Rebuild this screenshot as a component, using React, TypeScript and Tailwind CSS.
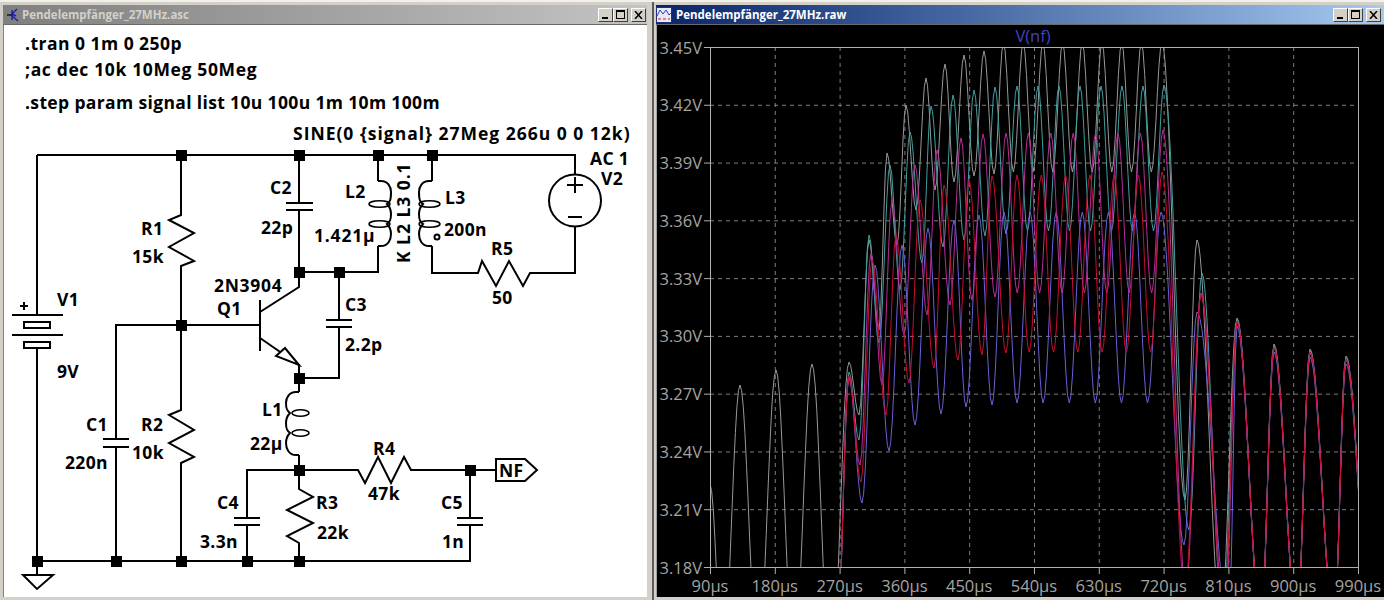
import React from "react";

type Pt = [number, number];

const FONT = "'Open Sans', 'DejaVu Sans', sans-serif";

// alternating extrema of each trace, page coordinates
const repeat = (x0: number, dx: number, n: number, hi: number, lo: number): Pt[] => {
  const out: Pt[] = [];
  for (let i = 0; i < n; i++) {
    out.push([x0 + i * dx, hi]);
    out.push([x0 + i * dx + dx / 2, lo]);
  }
  return out;
};

const tail = (off: number): Pt[] => [
  [1224 + off, 620],
  [1238, 320 + off],
  [1262, 620],
  [1275, 346 + off],
  [1298, 620],
  [1311, 351 + off],
  [1335, 620],
  [1347, 358 + off],
  [1372, 620],
];

const GRAY: Pt[] = [
  [711, 484], [724, 660], [741, 385], [759, 660], [777, 370], [795, 660], [813, 364], [832, 680],
  [850, 362], [860, 415], [870, 240], [880, 330], [888, 153], [898, 245], [907, 105], [917, 210],
  [927, 78], [936, 190], [946, 64], [955, 182], [965, 55], [975, 176], [985, 51], [995, 174],
  ...repeat(1004.5, 19.7, 8, 42, 172),
  [1163, 42], [1186, 500], [1198, 240], ...tail(-2),
];

const TEAL: Pt[] = [
  [838, 640], [850, 372], [860, 440], [870, 235], [880, 343], [891, 165], [901, 290], [911, 132],
  [923, 263], [932, 106], [944, 247], [954, 95], [965, 240], [975, 90], [986, 236], [996, 87],
  [1007, 234], ...repeat(1018, 21, 7, 86, 231),
  [1165, 85], [1190, 530], [1203, 273], ...tail(0),
];

const BLUE: Pt[] = [
  [838, 640], [850, 378], [863, 503], [876, 265], [890, 451], [903, 245], [916, 425], [929, 228],
  [942, 414], [955, 220], [967, 407], [980, 215], [993, 405], ...repeat(1005, 26.1, 6, 212, 403),
  [1162, 212], [1185, 545], [1198, 312], ...tail(6),
];

const MAGENTA: Pt[] = [
  [838, 640], [850, 376], [861, 465], [872, 253], [883, 385], [893, 200], [905, 335], [916, 165],
  [928, 315], [938, 150], [951, 305], [962, 138], [973, 300], [984, 134], [996, 297],
  ...repeat(1007, 22.4, 7, 133, 293),
  [1164, 130], [1187, 590], [1202, 293], ...tail(2),
];

const RED: Pt[] = [
  [838, 640], [850, 376], [862, 482], [873, 260], [887, 415], [897, 235], [910, 383], [921, 200],
  [935, 368], [945, 185], [959, 360], [970, 180], [983, 355], [993, 176], [1007, 353],
  ...repeat(1018, 24.3, 6, 175, 352),
  [1163, 172], [1186, 590], [1202, 295], ...tail(1),
];

const TRACES: [Pt[], string][] = [
  [GRAY, "#989898"],
  [TEAL, "#40a0a0"],
  [BLUE, "#6a60d8"],
  [MAGENTA, "#b82c98"],
  [RED, "#c80e30"],
];

function wave(ext: Pt[]) {
  const pts: string[] = [];
  for (let i = 0; i < ext.length - 1; i++) {
    const [x0, y0] = ext[i];
    const [x1, y1] = ext[i + 1];
    const steps = Math.max(2, Math.round((x1 - x0) / 1.6));
    for (let s = 0; s < steps; s++) {
      const t = s / steps;
      const y = y0 + ((y1 - y0) * (1 - Math.cos(Math.PI * t))) / 2;
      pts.push(`${(x0 + (x1 - x0) * t).toFixed(1)},${y.toFixed(1)}`);
    }
  }
  return pts.join(" ");
}

// x, baseline, text, width where it has to hit the reference
const LABELS: [number, number, string, number?][] = [
  [25, 50, ".tran 0 1m 0 250p", 157],
  [25, 76, ";ac dec 10k 10Meg 50Meg", 232],
  [25, 109, ".step param signal list 10u 100u 1m 10m 100m", 415],
  [293, 140, "SINE(0 {signal} 27Meg 266u 0 0 12k)", 337],
  [270, 194, "C2"],
  [345, 198, "L2"],
  [261, 234, "22p"],
  [314, 242, "1.421µ", 61],
  [141, 235, "R1"],
  [132, 263, "15k"],
  [57, 306, "V1"],
  [57, 378, "9V"],
  [214, 292, "2N3904", 68],
  [217, 315, "Q1"],
  [345, 311, "C3"],
  [345, 351, "2.2p"],
  [262, 416, "L1"],
  [250, 450, "22µ"],
  [86, 431, "C1"],
  [65, 469, "220n"],
  [141, 431, "R2"],
  [132, 459, "10k"],
  [217, 509, "C4"],
  [200, 548, "3.3n"],
  [316, 509, "R3"],
  [317, 539, "22k"],
  [373, 455, "R4"],
  [368, 500, "47k"],
  [441, 509, "C5"],
  [442, 548, "1n"],
  [499, 477, "NF"],
  [445, 204, "L3"],
  [444, 236, "200n"],
  [491, 255, "R5"],
  [492, 304, "50"],
  [590, 165, "AC 1"],
  [601, 185, "V2"],
];

const NODES: Pt[] = [
  [37, 561], [116, 561], [181, 561], [247, 561], [299, 561],
  [181, 155], [299, 155], [378, 155], [432, 155],
  [181, 325], [299, 272], [339, 272], [299, 378], [299, 470], [470, 470],
];

const WIRES = [
  "M37 155H575V174",
  "M37 155V315",
  "M37 348V575",
  "M37 561H470V525",
  "M181 155V215L169 220L194 233L169 247L194 261L181 266V410L169 415L194 430L169 443L194 457L181 463V561",
  "M116 561V447M116 439V325H260",
  "M103 439H129M103 447H129",
  "M299 155V203M286 203H313M286 210H313M299 210V287L260 312",
  "M260 300V351M260 338L299 365V378H339V327M339 320V272",
  "M326 320H352M326 327H352",
  "M299 272H378V246M378 181V155",
  "M432 155V181M432 246V273H478L482 261L496 286L509 261L523 286L530 273H575V227",
  "M299 378V392M299 455V470M247 518V470H358L365 483L378 457L391 483L404 457L411 470H496",
  "M234 518H260M234 525H260M247 525V561",
  "M299 470V489L313 497L287 510L313 523L287 536L299 543V561",
  "M470 470V518M457 518H483M457 525H483",
];

// inductor: three humps pinched where the small winding loops sit
function Coil({ x, ys, dir, loopX, rx }: { x: number; ys: number[]; dir: 1 | -1; loopX: number; rx: number }) {
  const o = (n: number) => x + dir * n;
  const [a, b, c, d] = ys;
  const path =
    `M${x} ${a}H${o(3)}C${o(10)} ${a} ${o(13)} ${a + 6} ${o(13)} ${a + 11}` +
    `C${o(13)} ${b - 4} ${o(12)} ${b - 2} ${o(9)} ${b}` +
    `C${o(12)} ${b + 3} ${o(13)} ${b + 6} ${o(13)} ${b + 10}` +
    `C${o(13)} ${c - 4} ${o(12)} ${c - 2} ${o(9)} ${c}` +
    `C${o(12)} ${c + 3} ${o(13)} ${c + 6} ${o(13)} ${c + 10}` +
    `C${o(13)} ${d - 6} ${o(10)} ${d} ${o(3)} ${d}H${x}`;
  return (
    <g>
      <path d={path} />
      <ellipse cx={loopX} cy={b} rx={rx} ry="3.2" strokeWidth="1.6" />
      <ellipse cx={loopX} cy={c} rx={rx} ry="3.2" strokeWidth="1.6" />
    </g>
  );
}

function Schematic() {
  return (
    <svg viewBox="4 25 643 572" className="block w-[643px] h-[572px]">
      <g fill="none" stroke="#000" strokeWidth="2">
        {WIRES.map((d) => (
          <path key={d} d={d} />
        ))}
        {/* V1 */}
        <path d="M12 315H63M12 335H63M24 322H50V328H24ZM24 342H50V348H24Z" />
        <path d="M20 306H28M24 302V310" />
        {/* ground */}
        <path d="M23 575H53L37 589Z" />
        {/* Q1 arrow */}
        <path d="M299 365L285 348L276 356Z" fill="#fff" />
        {/* V2 */}
        <circle cx="575" cy="200.5" r="26" />
        <path d="M567 185H583M575 177V193M568 217H582" />
        <Coil x={378} ys={[181, 204, 224, 246]} dir={1} loopX={379.5} rx={10.5} />
        <Coil x={432} ys={[181, 204, 224, 246]} dir={-1} loopX={429.5} rx={10.5} />
        <circle cx="437" cy="237" r="2.5" />
        <Coil x={299} ys={[392, 413, 433, 455]} dir={-1} loopX={300.5} rx={8.5} />
        <path d="M496 459H525L537 470L525 481H496Z" />
      </g>
      {NODES.map(([x, y]) => (
        <rect key={`${x}-${y}`} x={x - 5} y={y - 5} width="11" height="11" fill="#000" />
      ))}
      <g fontFamily={FONT} fontWeight="700" fontSize="17.5" letterSpacing="0.36" fill="#000">
        {LABELS.map(([x, y, s, w]) => (
          <text key={s} x={x} y={y} textLength={w}>
            {s}
          </text>
        ))}
        <text x="410" y="263" textLength="100" transform="rotate(-90 410 263)">
          K L2 L3 0.1
        </text>
      </g>
    </svg>
  );
}

function Plot() {
  const ys = ["3.45V", "3.42V", "3.39V", "3.36V", "3.33V", "3.30V", "3.27V", "3.24V", "3.21V", "3.18V"];
  const xs = ["90µs", "180µs", "270µs", "360µs", "450µs", "540µs", "630µs", "720µs", "810µs", "900µs", "990µs"];
  const dy = 520 / 9;
  const dx = 648 / 10;
  return (
    <svg viewBox="658 25 724 572" className="block w-[724px] h-[572px]">
      <defs>
        <clipPath id="plot-area">
          <rect x="711" y="47" width="648" height="520" />
        </clipPath>
      </defs>
      <g stroke="#7c7c7c" strokeDasharray="4 4" strokeWidth="1">
        {ys.slice(1, 9).map((_, i) => (
          <line key={i} x1="711" x2="1359" y1={47.5 + (i + 1) * dy} y2={47.5 + (i + 1) * dy} />
        ))}
        {xs.slice(1, 10).map((_, i) => (
          <line key={i} y1="47" y2="567" x1={711.5 + (i + 1) * dx} x2={711.5 + (i + 1) * dx} />
        ))}
      </g>
      <g clipPath="url(#plot-area)" fill="none" strokeWidth="1">
        {TRACES.map(([ext, color]) => (
          <polyline key={color} points={wave(ext)} stroke={color} />
        ))}
      </g>
      <rect x="711.5" y="47.5" width="648" height="520" fill="none" stroke="#b0b0b0" />
      <g stroke="#b0b0b0">
        {ys.map((_, i) => (
          <line key={i} x1="705" x2="711" y1={47.5 + i * dy} y2={47.5 + i * dy} />
        ))}
        {xs.map((_, i) => (
          <line key={i} y1="567" y2="574" x1={711.5 + i * dx} x2={711.5 + i * dx} />
        ))}
      </g>
      <g fontFamily={FONT} fontSize="16.5" fill="#a4a4a4">
        {ys.map((s, i) => (
          <text key={s} x="703" y={53.5 + i * dy} textAnchor="end">
            {s}
          </text>
        ))}
        {xs.map((s, i) => (
          <text key={s} x={711 + i * dx} y="592" textAnchor="middle">
            {s}
          </text>
        ))}
        <text x="1034" y="42" textAnchor="middle" fill="#4242c4">
          V(nf)
        </text>
      </g>
    </svg>
  );
}

function WinButtons({ tail }: { tail: string }) {
  const box = "w-[15px] h-[14px] bg-[#d4d0c8] border border-t-white border-l-white border-r-[#404040] border-b-[#404040] flex items-center justify-center";
  return (
    <div className={`flex items-center ${tail}`}>
      <span className={box}>
        <span className="block w-[6px] h-[2px] bg-black mt-[7px] mr-[2px]" />
      </span>
      <span className={box}>
        <span className="block w-[9px] h-[9px] border border-black border-t-2" />
      </span>
      <span className={`${box} ml-[3px]`}>
        <svg viewBox="0 0 9 8" className="w-[9px] h-[8px]">
          <path d="M1 0L8 8M8 0L1 8" stroke="#000" strokeWidth="1.5" />
        </svg>
      </span>
    </div>
  );
}

export default function App() {
  return (
    <div
      className="flex w-[1384px] h-[600px] overflow-hidden bg-[#d4d0c8] border-t-2 border-[#f2f0ea]"
      style={{ fontFamily: FONT }}
    >
      <div className="w-[654px] pl-[3px] pr-[5px] pt-[3px] border-r-2 border-[#5c5c5c]">
        <div className="h-[20px] flex items-center bg-gradient-to-r from-[#808080] to-[#c4c4c4] border-b border-[#6a6a6a]">
          <svg viewBox="0 0 14 16" className="w-[14px] h-[16px] ml-[3px]">
            <path d="M11 2L6 7L10 9M6 3V13M6 9L12 14" fill="none" stroke="#1a1ab8" strokeWidth="1.4" />
            <path d="M1 8H6" stroke="#000" strokeWidth="1.2" />
          </svg>
          <span className="ml-[2px] text-[11.5px] font-bold text-[#d4d0c8]">Pendelempfänger_27MHz.asc</span>
          <WinButtons tail="ml-auto mr-[1px]" />
        </div>
        <div className="h-[572px] bg-white border-l border-[#808080]">
          <Schematic />
        </div>
      </div>
      <div className="flex-1 pl-[2px] pt-[3px]">
        <div className="h-[20px] flex items-center bg-gradient-to-r from-[#0a246a] to-[#a6caf0] border-b border-[#6a6a6a]">
          <svg viewBox="0 0 16 16" className="w-[16px] h-[16px]">
            <rect x="0.5" y="0.5" width="15" height="15" fill="#e8e8f4" stroke="#203080" />
            <path d="M1 9L4 3L7 7L10 3L13 8L15 6" fill="none" stroke="#3040c0" />
            <path d="M2 12H5M7 12H10M12 12H14" stroke="#d02020" />
          </svg>
          <span className="ml-[4px] text-[11.5px] font-bold text-white">Pendelempfänger_27MHz.raw</span>
          <WinButtons tail="ml-auto mr-[3px]" />
        </div>
        <div className="h-[572px] bg-black border-l border-[#a0a0a0]">
          <Plot />
        </div>
      </div>
    </div>
  );
}
